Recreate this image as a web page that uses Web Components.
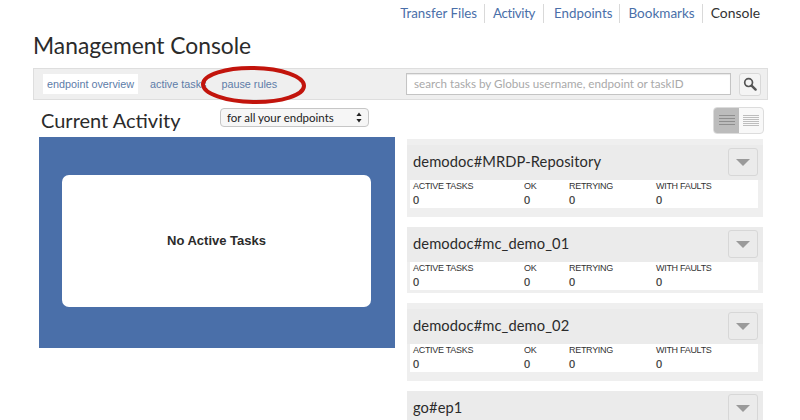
<!doctype html>
<html lang="en"><head><meta charset="utf-8"><title>Management Console</title>
<style>
html,body{margin:0;height:420px;overflow:hidden;background:#fff}
body{font-family:Lato,"Liberation Sans",sans-serif;color:#2e2e2e}
mc-page{display:block}
</style></head><body>
<mc-page></mc-page>
<script>
function def(name, html, init){
  customElements.define(name, class extends HTMLElement{
    constructor(){super();this.attachShadow({mode:'open'}).innerHTML=html;}
    connectedCallback(){ if(init&&!this._i){this._i=1;init(this);} }
  });
}
def('mc-nav',`<style>
:host{display:flex;justify-content:flex-end;height:27px;padding:4px 40px 0 0;box-sizing:border-box;font:13.3px Lato,sans-serif}
a{display:block;height:19px;line-height:18px;padding:0 7px 0 8px;color:#4a6fa9;border-right:1px solid #d9d9d9;text-decoration:none}
a.act{letter-spacing:-.35px;padding-right:8px}
a.ep{padding-left:10px}
a.bm{font-size:13.5px}
a:last-child{border:0;color:#333;padding-right:0;font-size:13.9px}
</style><a>Transfer Files</a><a class="act">Activity</a><a class="ep">Endpoints</a><a class="bm">Bookmarks</a><a>Console</a>`);
def('mc-title',`<style>
:host{display:block;height:41px;padding-left:33px;font:22.8px/36px Lato,sans-serif;color:#2b2b2b}
</style><slot></slot>`);
def('mc-tab',`<style>
:host{display:block;height:20px;padding:0 4px;font:10.8px/20px "Liberation Sans",sans-serif;color:#5d7ca8;white-space:nowrap}
:host([active]){background:#fff}
</style><slot></slot>`);
def('mc-search',`<style>
:host{display:flex;align-items:center;margin-left:auto}
.box{width:325px;height:22px;box-sizing:border-box;border:1px solid #c4c4c4;background:#fff;padding-left:7px;font:11.65px/20px Lato,sans-serif;color:#a9a9a9;white-space:nowrap;overflow:hidden;box-shadow:inset 0 1px 1px #e8e8e8}
.btn{margin:0 6px 0 8px;width:22px;height:23px;box-sizing:border-box;border:1px solid #d8d8d8;border-radius:3px;background:#f4f4f4;display:flex;align-items:center;justify-content:center}
</style><div class="box">search tasks by Globus username, endpoint or taskID</div>
<div class="btn"><svg width="14" height="14" viewBox="0 0 14 14"><circle cx="5.6" cy="5.6" r="3.9" fill="none" stroke="#555" stroke-width="1.7"/><path d="M8.6 8.6l4 4" stroke="#555" stroke-width="2.4" stroke-linecap="round"/></svg></div>`);
def('mc-toolbar',`<style>
:host{display:flex;align-items:center;position:relative;height:32px;box-sizing:border-box;margin:0 32px 0 33px;padding-left:9px;background:#efefef;border:1px solid #dedede;gap:8px}
svg{position:absolute;left:166px;top:-4px;pointer-events:none}
</style><slot></slot><svg width="108" height="40" viewBox="0 0 108 40"><ellipse cx="53.5" cy="20" rx="50.5" ry="17" fill="none" stroke="#c2140c" stroke-width="4" transform="rotate(1 53.5 20)"/></svg>`);
def('mc-columns',`<style>
:host{display:grid;grid-template-columns:356px 356px;gap:12px;margin-left:39px;width:724px}
</style><slot></slot>`);
def('mc-activity',`<style>
:host{display:block}
.head{display:flex;height:37px;box-sizing:border-box}
h2{margin:0 0 0 2px;width:179px;font:400 20px/41px Lato,sans-serif;color:#2b2b2b;white-space:nowrap}
.sel{margin-top:8px;width:149px;height:19px;box-sizing:border-box;border:1px solid #c6c6c6;border-radius:4px;background:#f6f6f6;padding:0 6px;font:11.5px/17px Lato,sans-serif;color:#222;display:flex;justify-content:space-between;align-items:center}
.panel{height:211px;background:#4a6fa9;padding:38px 24px 0 23px;box-sizing:border-box}
.card{height:132px;box-sizing:border-box;padding-bottom:2px;background:#fff;border-radius:7px;display:flex;align-items:center;justify-content:center;font:bold 13px "Liberation Sans",sans-serif;color:#2b2b2b}
</style><div class="head"><h2>Current Activity</h2><div class="sel"><span>for all your endpoints</span><svg width="6" height="11" viewBox="0 0 6 11"><path d="M3 0.5L5.6 4H.4zM3 10.5L.4 7h5.2z" fill="#222"/></svg></div></div>
<div class="panel"><div class="card">No Active Tasks</div></div>`);
def('mc-viewtoggle',`<style>
:host{display:flex;width:51px;height:27px;margin:7px -1px 5px auto;box-sizing:border-box;border-radius:4px;border:1px solid #dcdcdc;overflow:hidden;background:#f8f8f8}
div{flex:1;display:flex;align-items:center;justify-content:center}
.on{flex:0 0 25px;background:#bcbcbc}
</style><div class="on"><svg width="16" height="11" viewBox="0 0 16 11"><path d="M0 .5h16M0 3.5h16M0 6.5h16M0 9.5h16" stroke="#8e8e8e"/></svg></div>
<div><svg width="16" height="11" viewBox="0 0 16 11"><path d="M0 .5h16M0 2.5h16M0 4.5h16M0 6.5h16M0 8.5h16M0 10.5h16" stroke="#bdbdbd"/></svg></div>`);
def('mc-endpoint',`<style>
:host{display:block;margin-bottom:10px;background:#efefef;padding-bottom:3px}
:host([tall]){padding:6px 0 9px}
:host([cut]){padding:0;margin:0}
.head{height:35px;background:#ebebeb;display:flex;align-items:flex-start;justify-content:space-between;padding:3px 5px 0 6px;box-sizing:border-box}
:host([cut]) .head{height:29px}
.name{font:14.7px/27px Lato,sans-serif;color:#2b2b2b;letter-spacing:.1px}
.arrow{width:30px;height:28px;box-sizing:border-box;border:1px solid #d7d7d7;border-radius:3px;display:flex;align-items:center;justify-content:center}
.tbl{height:28px;margin:0 5px 0 3px;background:#fff;padding-left:3px;display:grid;grid-template-columns:111px 45px 87px 1fr;font:9px/12px "Liberation Sans",sans-serif;color:#333}
.tbl span{display:block;letter-spacing:-.3px}
.tbl b{display:block;font:400 11px/16px "Liberation Sans",sans-serif;color:#333;-webkit-text-stroke:.2px #333}
</style><div class="head"><div class="name"><slot></slot></div><div class="arrow"><svg width="14" height="7" viewBox="0 0 14 7"><path d="M0 0h14L7 7z" fill="#9a9a9a"/></svg></div></div>
<div class="tbl"><div><span>ACTIVE TASKS</span><b>0</b></div><div><span>OK</span><b>0</b></div><div><span>RETRYING</span><b>0</b></div><div><span>WITH FAULTS</span><b>0</b></div></div>`,
el=>{ if(el.hasAttribute('cut')) el.shadowRoot.querySelector('.tbl').remove(); });
def('mc-page',`<style>:host{display:block}</style>
<mc-nav></mc-nav><mc-title>Management Console</mc-title>
<mc-toolbar><mc-tab active>endpoint overview</mc-tab><mc-tab>active tasks</mc-tab><mc-tab style="margin-left:-1px">pause rules</mc-tab><mc-search></mc-search></mc-toolbar>
<mc-columns><mc-activity></mc-activity><div><mc-viewtoggle></mc-viewtoggle>
<mc-endpoint tall>demodoc#MRDP-Repository</mc-endpoint><mc-endpoint>demodoc#mc_demo_01</mc-endpoint><mc-endpoint tall>demodoc#mc_demo_02</mc-endpoint><mc-endpoint cut>go#ep1</mc-endpoint></div></mc-columns>`);
</script>
</body></html>
